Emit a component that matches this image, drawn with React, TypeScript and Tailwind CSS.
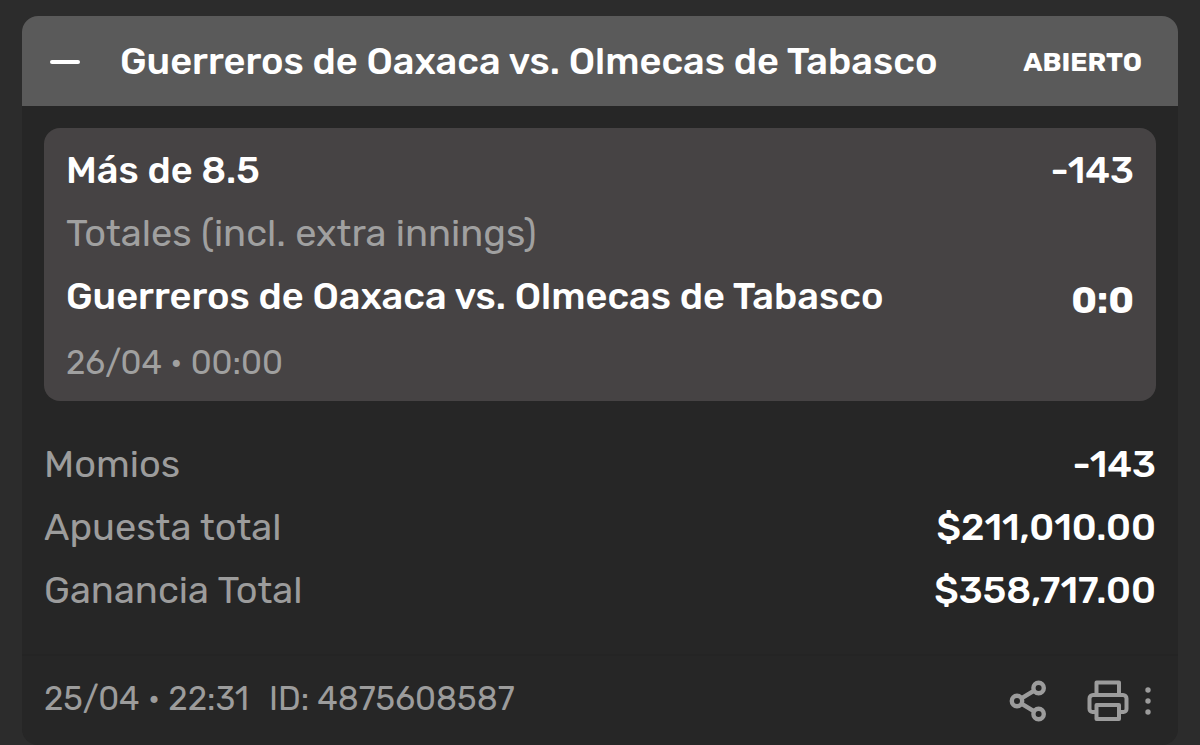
const MATCH = 'Guerreros de Oaxaca vs. Olmecas de Tabasco'

const SUMMARY = [
  { label: 'Momios', value: '-143' },
  { label: 'Apuesta total', value: '$211,010.00' },
  { label: 'Ganancia Total', value: '$358,717.00' },
]

function ShareIcon() {
  return (
    <svg width="38" height="42" viewBox="0 0 38 42" fill="none" stroke="currentColor" strokeWidth="4.4" aria-hidden="true">
      <circle cx="8" cy="21" r="5.2" />
      <circle cx="29.6" cy="8" r="5.2" />
      <circle cx="29.6" cy="34" r="5.2" />
      <path d="M12.4 18.4 25.2 10.6M12.4 23.6 25.2 31.4" />
    </svg>
  )
}

function PrintIcon() {
  return (
    <svg
      width="42"
      height="42"
      viewBox="0 0 42 42"
      fill="none"
      stroke="currentColor"
      strokeWidth="4"
      strokeLinejoin="round"
      aria-hidden="true"
    >
      <path d="M9.5 15V2.5h22.5V15" />
      <path d="M9 32H5.5a3 3 0 0 1-3-3V18.500a3.500 3.500 0 0 1 3.500-3.500h30a3.500 3.500 0 0 1 3.500 3.500V29a3 3 0 0 1-3 3H32" />
      <path d="M9.500 25H32v14H9.500z" />
    </svg>
  )
}

function MoreIcon() {
  return (
    <svg width="6" height="28" viewBox="0 0 6 28" fill="currentColor" aria-hidden="true">
      <circle cx="3" cy="3" r="2.7" />
      <circle cx="3" cy="14" r="2.7" />
      <circle cx="3" cy="25" r="2.7" />
    </svg>
  )
}

export default function App() {
  return (
    <div className="min-h-screen overflow-x-hidden bg-[#2c2c2c] px-[22px] pt-4 font-['Rubik','Roboto',sans-serif] text-white">
      <article className="overflow-hidden rounded-2xl bg-[#262626]">
        <header className="flex h-[90px] items-center bg-[#5a5a5a] pr-9 pl-7">
          <button type="button" aria-label="Contraer" className="flex h-12 w-[70px] items-center pt-[2px]">
            <span className="h-1 w-[30px] rounded-full bg-white" />
          </button>
          <h1 className="flex-1 text-[38px] leading-none font-medium whitespace-nowrap">{MATCH}</h1>
          <span className="pt-[2px] text-[27px] leading-none font-bold">ABIERTO</span>
        </header>

        {/* Selection */}
        <section className="m-[22px] rounded-2xl bg-[#464344] px-[22px] pt-[11px] pb-2">
          <div className="flex items-center justify-between text-[38px] leading-[63px] font-medium">
            <h2>Más de 8.5</h2>
            <span>-143</span>
          </div>
          <p className="text-[38px] leading-[63px] text-[#a0a0a0]">Totales (incl. extra innings)</p>
          <div className="flex items-start justify-between text-[38px] leading-[63px] font-medium">
            <h3 className="whitespace-nowrap">{MATCH}</h3>
            <span className="pt-1 font-bold">0:0</span>
          </div>
          <p className="text-[33px] leading-[61px] text-[#a0a0a0]">26/04 • 00:00</p>
        </section>

        {/* Totals */}
        <dl className="px-[22px] pt-[10px] pb-8">
          {SUMMARY.map((row) => (
            <div key={row.label} className="flex justify-between text-[38px] leading-[63px]">
              <dt className="text-[#9c9c9c]">{row.label}</dt>
              <dd className="font-medium">{row.value}</dd>
            </div>
          ))}
        </dl>

        <footer className="flex h-[91px] items-center justify-between border-t-2 border-[#242424] px-[22px] text-[#9c9c9c]">
          <p className="flex gap-5 pb-1 text-[33px] leading-none">
            <span>25/04 • 22:31</span>
            <span>ID: 4875608587</span>
          </p>
          <div className="flex items-center">
            <button type="button" aria-label="Compartir" className="mr-10">
              <ShareIcon />
            </button>
            <button type="button" aria-label="Imprimir" className="mr-4">
              <PrintIcon />
            </button>
            <button type="button" aria-label="Más opciones" className="mr-[5px]">
              <MoreIcon />
            </button>
          </div>
        </footer>
      </article>
    </div>
  )
}
